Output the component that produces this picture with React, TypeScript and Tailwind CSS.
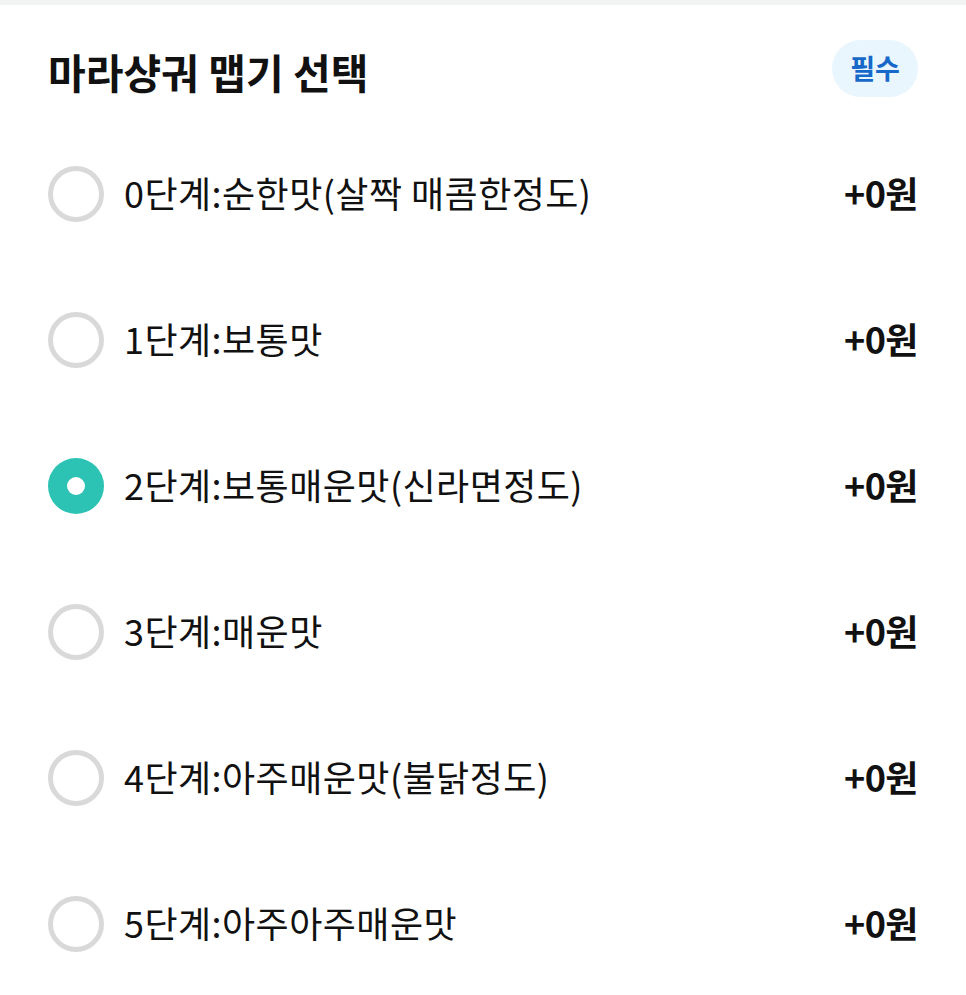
import { useState } from "react";

const levels = [
  "0단계:순한맛(살짝 매콤한정도)",
  "1단계:보통맛",
  "2단계:보통매운맛(신라면정도)",
  "3단계:매운맛",
  "4단계:아주매운맛(불닭정도)",
  "5단계:아주아주매운맛",
];

export default function App() {
  const [selected, setSelected] = useState(2);

  return (
    <div
      className="min-h-screen bg-white text-[#111]"
      style={{ fontFamily: '"Noto Sans CJK KR", "Noto Sans", sans-serif' }}
    >
      <div className="h-[5px] bg-[#f2f4f4]" />
      <div className="px-12">
        {/* header */}
        <div className="mt-[35px] flex h-[57px] items-center justify-between">
          <h2 className="mt-[6px] text-[41px] font-bold leading-none text-[#111]">
            마라샹궈 맵기 선택
          </h2>
          <span className="flex h-[57px] w-[86px] items-center justify-center rounded-full bg-[#eaf6fe] text-[27px] font-bold text-[#1769c9]">
            필수
          </span>
        </div>

        {/* options */}
        <div className="mt-6 flex flex-col">
          {levels.map((label, i) => {
            const on = selected === i;
            return (
              <label
                key={label}
                className="flex h-[146px] cursor-pointer items-center"
                onClick={() => setSelected(i)}
              >
                {on ? (
                  <span className="flex h-[56px] w-[56px] shrink-0 items-center justify-center rounded-full bg-[#2cc3b5]">
                    <span className="h-[18px] w-[18px] rounded-full bg-white" />
                  </span>
                ) : (
                  <span className="h-[56px] w-[56px] shrink-0 rounded-full border-[5px] border-[#d9d9d9]" />
                )}
                <span className="ml-5 flex-1 pb-[5px] text-[36px] leading-none tracking-[0.45px] text-[#111]">{label}</span>
                <span className="pb-[5px] text-[36px] font-bold leading-none tracking-[-0.5px] text-[#111]">+0원</span>
              </label>
            );
          })}
        </div>
      </div>
    </div>
  );
}
